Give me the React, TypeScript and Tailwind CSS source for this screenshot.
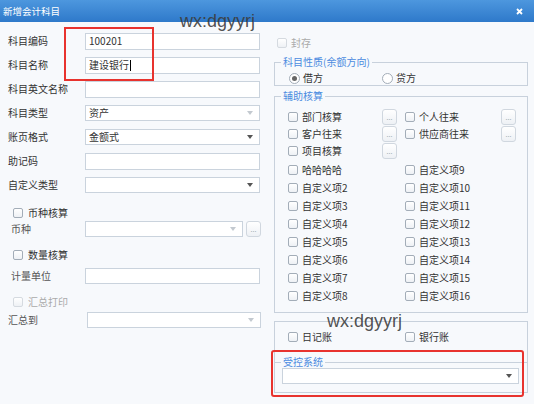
import React from "react";

type Kid = { children?: React.ReactNode };

// little down-pointing triangle used by the combo boxes
const Arrow = ({ faint }: { faint?: boolean }) => (
  <svg width="6" height="4" viewBox="0 0 6 4" className={faint ? "text-[#c3c9d0]" : "text-[#555]"}>
    <path d="M0 0h6L3 4z" fill="currentColor" />
  </svg>
);

const Box = ({ disabled }: { disabled?: boolean }) => (
  <span
    className={`w-[10px] h-[10px] shrink-0 rounded-[2px] border bg-linear-to-b from-white to-[#eef1f5] ${
      disabled ? "border-[#d5dae0]" : "border-[#a3adb8]"
    }`}
  />
);

const Radio = ({ on }: { on?: boolean }) => (
  <span className="w-[11px] h-[11px] shrink-0 rounded-full border border-[#a3adb8] bg-white flex items-center justify-center">
    {on && <span className="w-[5px] h-[5px] rounded-full bg-[#666]" />}
  </span>
);

const Dots = () => (
  <span className="w-[15px] h-[16px] shrink-0 rounded-[3px] border border-[#d0d7df] bg-linear-to-b from-white to-[#eef1f5] flex items-end justify-center pb-[3px] text-[7px] leading-none text-[#9aa]">
    ...
  </span>
);

const Input = ({ children }: Kid) => (
  <div className="w-[175px] h-[17px] bg-white border border-[#cad3dd] pl-[3px] flex items-center">
    {children}
  </div>
);

const Select = ({
  value,
  faint,
  width = "w-[175px]",
}: {
  value?: string;
  faint?: boolean;
  width?: string;
}) => (
  <div className={`${width} h-[16px] bg-white border border-[#cad3dd] pl-[3px] pr-[6px] flex items-center justify-between`}>
    <span>{value}</span>
    <Arrow faint={faint} />
  </div>
);

const Row = ({ label, children }: Kid & { label: string }) => (
  <div className="h-[24px] flex items-center">
    <span className="w-[77px] shrink-0">{label}</span>
    {children}
  </div>
);

const Check = ({ label, disabled }: { label: string; disabled?: boolean }) => (
  <span className={`flex items-center gap-[4px] ${disabled ? "text-[#aaa]" : ""}`}>
    <Box disabled={disabled} />
    {label}
  </span>
);

const Legend = ({ children }: Kid) => (
  <legend className="ml-[6px] px-[2px] leading-[12px] text-[#4b8be0]">{children}</legend>
);

const accounting: [string, string | null][] = [
  ["部门核算", "个人往来"],
  ["客户往来", "供应商往来"],
  ["项目核算", null],
];

const custom: [string, string][] = [
  ["哈哈哈哈", "自定义项9"],
  ["自定义项2", "自定义项10"],
  ["自定义项3", "自定义项11"],
  ["自定义项4", "自定义项12"],
  ["自定义项5", "自定义项13"],
  ["自定义项6", "自定义项14"],
  ["自定义项7", "自定义项15"],
  ["自定义项8", "自定义项16"],
];

export default function App() {
  return (
    <div className="relative w-[534px] h-[404px] overflow-hidden bg-[#f7f9fc] text-[10px] leading-[12px] text-[#333] font-['Noto_Sans_CJK_SC',sans-serif]">
      {/* title bar */}
      <div className="h-[22px] flex items-center justify-between pl-[3px] pr-[11px] bg-linear-to-b from-[#4d97de] to-[#2e79ca] text-white">
        <span className="text-[9.5px]">新增会计科目</span>
        <svg width="7" height="7" viewBox="0 0 7 7">
          <path d="M1 1l5 5M6 1L1 6" stroke="white" strokeWidth="1.8" />
        </svg>
      </div>

      <div className="flex">
        {/* left: basic fields */}
        <div className="w-[274px] shrink-0 pl-[8px] pt-[7px]">
          <Row label="科目编码">
            <Input>100201</Input>
          </Row>
          <Row label="科目名称">
            <Input>
              建设银行
              <span className="w-px h-[11px] bg-black ml-[1px]" />
            </Input>
          </Row>
          <Row label="科目英文名称">
            <Input />
          </Row>
          <Row label="科目类型">
            <Select value="资产" faint />
          </Row>
          <Row label="账页格式">
            <Select value="金额式" />
          </Row>
          <Row label="助记码">
            <Input />
          </Row>
          <Row label="自定义类型">
            <Select />
          </Row>

          <div className="mt-[9px] h-[14px] flex items-center gap-[5px] pl-[5px]">
            <Box />
            <span>币种核算</span>
          </div>
          <div className="mt-[1px] h-[16px] flex items-center">
            <span className="w-[77px] shrink-0 pl-[3px] text-[#555]">币种</span>
            <Select width="w-[158px]" faint />
            <span className="ml-[3px]">
              <Dots />
            </span>
          </div>

          <div className="mt-[11px] h-[14px] flex items-center gap-[5px] pl-[5px]">
            <Box />
            <span>数量核算</span>
          </div>
          <div className="mt-[6px] h-[16px] flex items-center">
            <span className="w-[77px] shrink-0 pl-[3px] text-[#555]">计量单位</span>
            <div className="w-[175px] h-[16px] bg-white border border-[#cad3dd]" />
          </div>

          <div className="mt-[11px] h-[14px] flex items-center gap-[5px] pl-[5px] text-[#aaa]">
            <Box disabled />
            <span>汇总打印</span>
          </div>
          <div className="mt-[3px] h-[16px] flex items-center">
            <span className="w-[79px] shrink-0 text-[#555]">汇总到</span>
            <Select width="w-[174px]" faint />
          </div>
        </div>

        {/* right: nature, auxiliary accounting, controls */}
        <div className="w-[254px] shrink-0 pt-[14px]">
          <div className="h-[14px] flex items-center pl-[3px]">
            <Check label="封存" disabled />
          </div>

          <fieldset className="mt-[6px] border border-[#c8d1dc] pb-[1px]">
            <Legend>科目性质(余额方向)</Legend>
            <div className="mt-[4px] h-[12px] flex items-center pl-[14px]">
              <span className="w-[93px] flex items-center gap-[3px]">
                <Radio on />
                借方
              </span>
              <span className="flex items-center gap-[3px]">
                <Radio />
                贷方
              </span>
            </div>
          </fieldset>

          <fieldset className="mt-[4px] border border-[#c8d1dc] pb-[7px]">
            <Legend>辅助核算</Legend>
            <div className="pt-[6px] pl-[13px] pr-[11px]">
              {accounting.map(([a, b]) => (
                <div key={a} className="h-[17px] grid grid-cols-[117px_1fr] items-center">
                  <div className="flex items-center justify-between pr-[8px]">
                    <Check label={a} />
                    <Dots />
                  </div>
                  {b && (
                    <div className="flex items-center justify-between">
                      <Check label={b} />
                      <Dots />
                    </div>
                  )}
                </div>
              ))}
              <div className="mt-[2px]">
                {custom.map(([a, b]) => (
                  <div key={a} className="h-[18px] grid grid-cols-[117px_1fr] items-center">
                    <Check label={a} />
                    <Check label={b} />
                  </div>
                ))}
              </div>
            </div>
          </fieldset>

          <div className="mt-[8px] border border-[#c8d1dc]">
            <div className="mt-[8px] h-[14px] grid grid-cols-[117px_1fr] items-center pl-[13px]">
              <Check label="日记账" />
              <Check label="银行账" />
            </div>
            <fieldset className="mt-[12px] -mx-px -mb-px border border-[#c8d1dc] pb-[8px]">
              <Legend>受控系统</Legend>
              <div className="pl-[7px] pr-[8px]">
                <Select width="w-full" />
              </div>
            </fieldset>
          </div>
        </div>
      </div>

      {/* annotation marks */}
      <div className="absolute left-[64px] top-[27px] w-[90px] h-[54px] border-2 border-[#e8332e]" />
      <div className="absolute left-[271px] top-[350px] w-[253px] h-[47px] border-2 border-[#e8332e] rounded-[3px]" />
      <span className="absolute left-[180px] top-[12px] text-[18px] leading-[18px] font-['Liberation_Sans',sans-serif] text-[#3c3c3c]/90">
        wx:dgyyrj
      </span>
      <span className="absolute left-[327px] top-[312px] text-[18px] leading-[18px] font-['Liberation_Sans',sans-serif] text-[#3c3c3c]/90">
        wx:dgyyrj
      </span>
    </div>
  );
}
